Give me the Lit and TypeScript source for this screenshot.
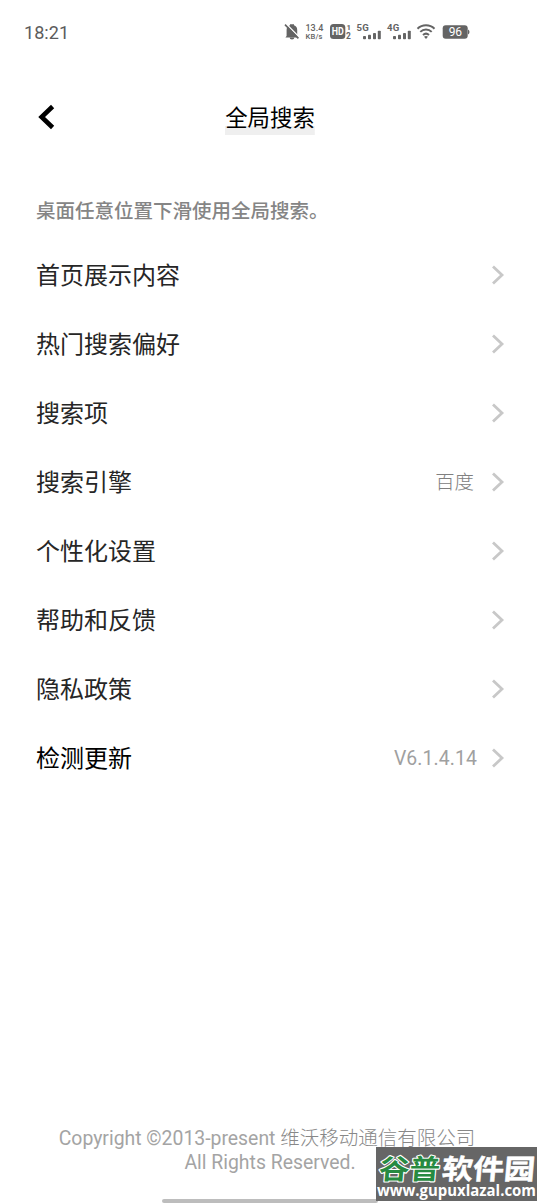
import { LitElement, html, css, svg } from "lit";
import { customElement, property } from "lit/decorators.js";

@customElement("status-bar")
class StatusBar extends LitElement {
  static styles = css`
    :host { display: block; height: 64px; }
    .bar { display: flex; align-items: center; justify-content: space-between; height: 64px; padding: 0 69px 0 24px; box-sizing: border-box; }
    .time { font: 18.1px/22px Roboto, sans-serif; color: #5c5c5c; padding-top: 1px; }
    svg { display: block; overflow: visible; }
    text { font-family: Roboto, sans-serif; }
  `;
  bars(x: number) {
    return svg`<g>
      <rect x=${x} y="20" width="3" height="3.2" rx=".8"/><rect x=${x + 5} y="18.7" width="3" height="4.5" rx=".8"/>
      <rect x=${x + 10} y="17" width="3" height="6.2" rx=".8"/><rect x=${x + 14.8} y="14.8" width="3" height="8.4" rx=".8"/></g>`;
  }
  render() {
    return html`<div class="bar">
      <span class="time">18:21</span>
      <svg width="187" height="32" viewBox="284 0 187 32" fill="#646464">
        <path d="M286.6 20V14A5 5 0 0 1 290 9.3V8.3h4v1a5 5 0 0 1 3.2 4.7v6l1.4 1.4h-13.2zM289.7 21.8h4.6a2.3 1.6 0 0 1-4.6 0z"/>
        <path d="M286.3 8l13.2 13.6" stroke="#fff" stroke-width="1.4"/>
        <path d="M285 8.6l13.4 13.8" stroke="#646464" stroke-width="1.6"/>
        <text x="305.5" y="14.9" font-size="9" textLength="17.8" font-weight="500">13.4</text>
        <text x="305.5" y="22.8" font-size="7.6" textLength="17" font-weight="500">KB/s</text>
        <rect x="330" y="8" width="15.3" height="15" rx="3.5"/>
        <text x="331.7" y="19.2" font-size="10" font-weight="700" fill="#fff" textLength="12" lengthAdjust="spacingAndGlyphs">HD</text>
        <text x="346.6" y="14.1" font-size="7.8" font-weight="700">1</text>
        <text x="346" y="23" font-size="8.4" font-weight="700">2</text>
        <text x="356.5" y="14.6" font-size="9.6" font-weight="700" textLength="12.3">5G</text>
        ${this.bars(363)}
        <text x="387" y="14.6" font-size="9.6" font-weight="700" textLength="12.3">4G</text>
        ${this.bars(393)}
        <g fill="none" stroke="#646464" stroke-width="2"><path d="M417.5 12.7a12.2 12.2 0 0 1 17 0M420.3 15.9a8.2 8.2 0 0 1 11.4 0M423 19a4.5 4.5 0 0 1 6 0"/></g>
        <path d="M424 20.7q2-1.4 4 0l-2 2.2z"/>
        <rect x="442.7" y="9.2" width="25" height="13.6" rx="3"/><path d="M468 13.4q1.5.8 1.5 2.6t-1.5 2.6z"/>
        <text x="448.8" y="20.2" font-size="12" font-weight="400" fill="#fff" textLength="13.3">96</text>
      </svg>
    </div>`;
  }
}

@customElement("setting-row")
class SettingRow extends LitElement {
  @property() label = "";
  @property() value = "";
  @property({ type: Boolean, reflect: true }) strong = false;
  static styles = css`
    :host { display: flex; align-items: center; height: 69px; color: #262626; }
    :host([strong]) { color: #000; }
    .label { flex: 1; font: 24px/36px "Noto Sans CJK SC", sans-serif; padding-bottom: 2px; }
    .value { font: 19.4px/28px Roboto, "Noto Sans CJK SC", sans-serif; font-weight: 300; color: #808080; margin-right: 17px; padding-top: 2px; }
    .version { font-weight: 400; letter-spacing: 0.1px; color: #a0a0a0; margin-right: 14px; }
    svg { display: block; }
  `;
  render() {
    return html`<span class="label">${this.label}</span>
      ${this.value ? html`<span class="value ${this.strong ? "version" : ""}">${this.value}</span>` : ""}
      <svg width="14" height="20" viewBox="0 0 14 20"><path d="M2 1.5L11 10L2 18.5" fill="none" stroke="#c8c8c8" stroke-width="2.8"/></svg>`;
  }
}

@customElement("site-mark")
class SiteMark extends LitElement {
  static styles = css`
    :host { display: block; width: 161px; height: 54px; background: #666; }
    svg { display: block; overflow: visible; }
    .name { font-family: "Noto Sans CJK SC", sans-serif; font-weight: 700; font-size: 27.5px; }
    .url { font-family: "Open Sans", sans-serif; font-weight: 700; font-size: 15.5px; }
  `;
  render() {
    return html`<svg width="161" height="54" viewBox="0 0 161 54">
      <g transform="translate(3 0) skewX(-5)">
        <text class="name" x="2" y="32.5" textLength="61" lengthAdjust="spacingAndGlyphs" fill="#278a41" stroke="#fff" stroke-width="2.2" stroke-linejoin="round" paint-order="stroke">谷普</text>
        <text class="name" x="65" y="32.5" textLength="93" lengthAdjust="spacingAndGlyphs" fill="#fff" stroke="#fff" stroke-width=".5">软件园</text>
      </g>
      <text class="url" x="1" y="49" textLength="159" lengthAdjust="spacingAndGlyphs" fill="#fff">www.gupuxlazal.com</text>
    </svg>`;
  }
}

@customElement("app-root")
class AppRoot extends LitElement {
  static styles = css`
    :host { display: flex; flex-direction: column; position: relative; width: 540px; height: 1204px; background: #fff; font-family: Roboto, "Noto Sans CJK SC", sans-serif; }
    .head { display: grid; grid-template-columns: 90px 1fr 90px; align-items: center; height: 106px; box-sizing: border-box; }
    .back { display: block; margin-left: 37px; }
    .title { justify-self: center; font: 22.4px/34px "Noto Sans CJK SC", sans-serif; color: #000; height: 36px; background: linear-gradient(#efefef, #efefef) bottom / 100% 9px no-repeat; }
    .tip { margin: 26px 0 16px 36px; font: 500 19.5px/28px "Noto Sans CJK SC", sans-serif; color: #858585; height: 28px; }
    .rows { padding: 0 35px 0 36px; }
    .foot { margin-top: auto; padding-bottom: 29px; font-size: 19.4px; line-height: 24px; color: #a4a4a4; text-align: center; }
    .cn { font-weight: 300; font-size: 19.5px; color: #888; }
    .line { height: 24px; white-space: nowrap; padding-right: 6px; }
    .line + .line { padding-right: 0; }
    .home { position: absolute; left: 162px; bottom: 1.5px; width: 216px; height: 3.5px; border-radius: 2px; background: #bdbdbd; }
    site-mark { position: absolute; left: 376px; top: 1147px; }
  `;
  rows = [
    { label: "首页展示内容" },
    { label: "热门搜索偏好" },
    { label: "搜索项" },
    { label: "搜索引擎", value: "百度" },
    { label: "个性化设置" },
    { label: "帮助和反馈" },
    { label: "隐私政策" },
    { label: "检测更新", value: "V6.1.4.14", strong: true },
  ];
  render() {
    return html`<status-bar></status-bar>
      <div class="head">
        <svg class="back" width="18" height="26" viewBox="0 0 18 26"><path d="M15.6 2.5L4.6 13L15.6 23.5" fill="none" stroke="#000" stroke-width="4.6"/></svg>
        <span class="title">全局搜索</span>
      </div>
      <div class="tip">桌面任意位置下滑使用全局搜索。</div>
      <div class="rows">
        ${this.rows.map((r) => html`<setting-row .label=${r.label} .value=${r.value ?? ""} .strong=${!!r.strong}></setting-row>`)}
      </div>
      <div class="foot">
        <div class="line">Copyright ©2013-present <span class="cn">维沃移动通信有限公司</span></div>
        <div class="line">All Rights Reserved.</div>
      </div>
      <div class="home"></div>
      <site-mark></site-mark>`;
  }
}
